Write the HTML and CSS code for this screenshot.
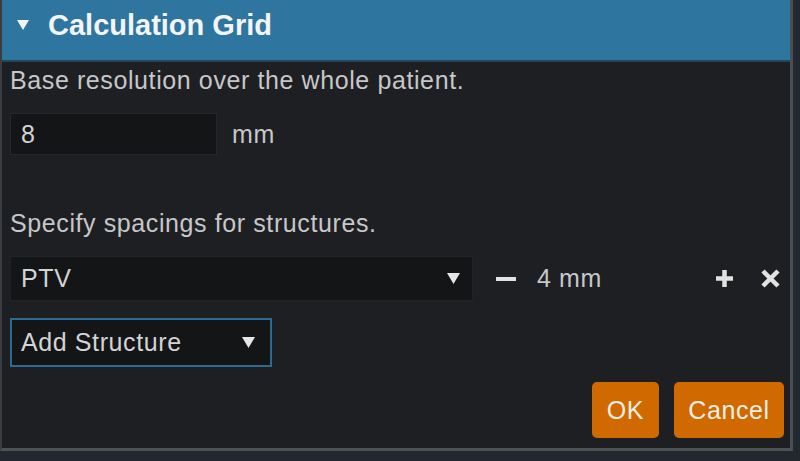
FILE: index.html
```html
<!DOCTYPE html>
<html>
<head>
<meta charset="utf-8">
<link rel="stylesheet" href="styles.css">
</head>
<body>
<div class="panel">
  <div class="header">
    <svg class="caret" width="12" height="10" viewBox="0 0 12 10"><polygon points="0,0 12,0 6,10" fill="#f4f4f4"/></svg>
    <span class="title">Calculation Grid</span>
  </div>
  <div class="content">
    <div class="label">Base resolution over the whole patient.</div>
    <div class="row base-row">
      <div class="input">8</div>
      <span class="unit">mm</span>
    </div>
    <div class="label spec">Specify spacings for structures.</div>
    <div class="row struct-row">
      <div class="select ptv"><span>PTV</span><svg class="arrow" width="13" height="11" viewBox="0 0 13 11"><polygon points="0,0 13,0 6.5,11" fill="#e6e6e6"/></svg></div>
      <span class="minus"></span>
      <span class="value">4 mm</span>
      <span class="spacer"></span>
      <svg class="plus" width="19" height="19" viewBox="0 0 19 19"><path d="M9.5 1 V18 M1 9.5 H18" stroke="#e2e2e2" stroke-width="4.5"/></svg>
      <svg class="close" width="21" height="21" viewBox="0 0 21 21"><path d="M3 3 L18 18 M18 3 L3 18" stroke="#e2e2e2" stroke-width="4.5"/></svg>
    </div>
    <div class="select add"><span>Add Structure</span><svg class="arrow" width="13" height="11" viewBox="0 0 13 11"><polygon points="0,0 13,0 6.5,11" fill="#e6e6e6"/></svg></div>
    <div class="actions">
      <button class="btn ok">OK</button>
      <button class="btn cancel">Cancel</button>
    </div>
  </div>
</div>
</body>
</html>
```
FILE: styles.css
```css
html, body {
  margin: 0;
  padding: 0;
  background: #22282f;
  width: 800px;
  height: 461px;
  overflow: hidden;
  font-family: "Liberation Sans", Arial, sans-serif;
}
.panel {
  width: 793px;
  height: 451px;
  background: #1e1f22;
  border-left: 2px solid #3a3c3f;
  border-right: 3px solid #4a4e53;
  border-bottom: 3px solid #4d5257;
  box-sizing: border-box;
  display: flex;
  flex-direction: column;
}
.header {
  height: 60px;
  background: #2e76a0;
  border-bottom: 2px solid #23465c;
  display: flex;
  align-items: center;
  padding-left: 15px;
  color: #f4f4f4;
  flex-shrink: 0;
}
.caret {
  margin-right: 19px;
  margin-top: -11px;
}
.title {
  font-weight: bold;
  font-size: 29px;
  margin-top: -10px;
}
.content {
  flex: 1;
  padding: 3px 6px 0 8px;
  display: flex;
  flex-direction: column;
  color: #c6c7c9;
  letter-spacing: 0.6px;
}
.label {
  font-size: 25px;
  line-height: 30px;
}
.row {
  display: flex;
  align-items: center;
}
.base-row {
  margin-top: 18px;
}
.input {
  width: 207px;
  height: 42px;
  background: #141517;
  border: 1px solid #25272a;
  box-sizing: border-box;
  font-size: 25px;
  display: flex;
  align-items: center;
  padding-left: 10px;
  color: #d2d3d5;
}
.unit {
  margin-left: 15px;
  font-size: 25px;
}
.spec {
  margin-top: 53px;
}
.struct-row {
  margin-top: 18px;
  font-size: 25px;
}
.select {
  background: #141517;
  display: flex;
  align-items: center;
  justify-content: space-between;
  box-sizing: border-box;
  font-size: 25px;
  color: #d2d3d5;
}
.ptv {
  width: 463px;
  height: 45px;
  padding: 0 12px 0 10px;
  border: 1px solid #202225;
}
.minus {
  margin-left: 23px;
  width: 20px;
  height: 4px;
  background: #e2e2e2;
}
.value {
  margin-left: 21px;
}
.spacer {
  flex: 1;
}
.plus {
  margin-right: 26px;
}
.close {
  margin-right: 3px;
}
.add {
  margin-top: 17px;
  width: 262px;
  height: 49px;
  border: 2px solid #2d6a91;
  padding: 0 15px 0 9px;
}
.actions {
  display: flex;
  justify-content: flex-end;
  gap: 15px;
  margin-top: 15px;
}
.btn {
  background: #cf6900;
  border: none;
  border-radius: 5px;
  color: #f5efe6;
  font-family: "Liberation Sans", Arial, sans-serif;
  font-size: 25px;
  letter-spacing: 0.6px;
  height: 56px;
  padding: 0;
}
.ok {
  width: 67px;
}
.cancel {
  width: 110px;
}
```
